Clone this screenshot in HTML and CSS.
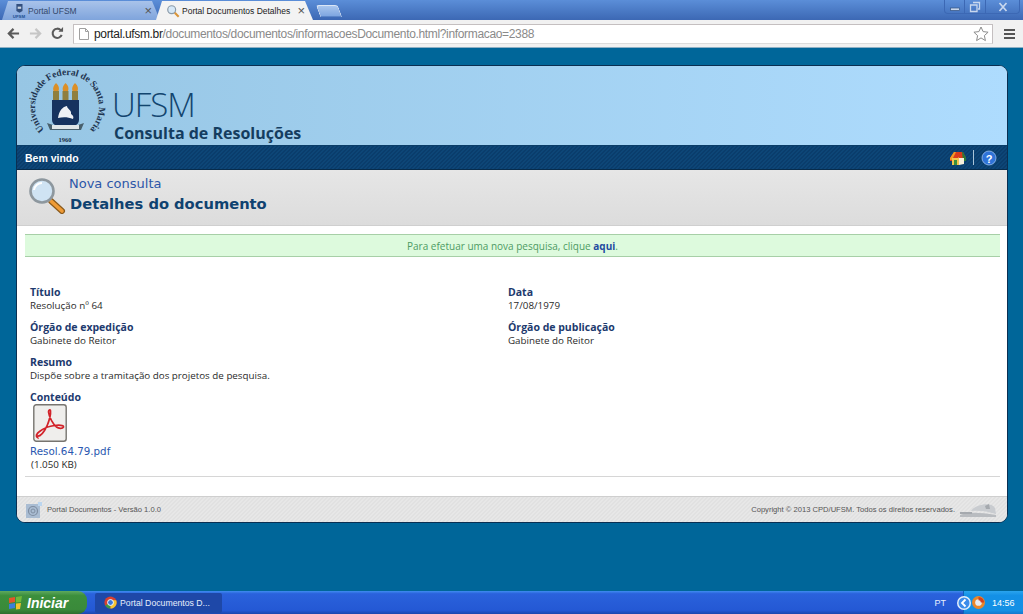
FILE: index.html
```html
<!DOCTYPE html>
<html lang="pt">
<head>
    <meta charset="UTF-8">
    <title>Portal Documentos Detalhes</title>
    <link rel="stylesheet" href="styles.css">
</head>
<body>

    <!-- Browser window -->
    <div class="tabstrip">
        <div class="tab tab-off">
            <svg class="tab-icon" viewBox="0 0 16 16"><path d="M5 0h7v8l-3.500 2L5 8z" fill="#33507f"/><rect x="6.500" y="3" width="4" height="2.500" fill="#c9d3e0"/><text class="tab-icon-text" x="8" y="15.500" text-anchor="middle">UFSM</text></svg>
            <span class="tab-label">Portal UFSM</span>
            <span class="tab-close">×</span>
        </div>
        <div class="tab tab-on">
            <svg class="tab-icon" viewBox="0 0 16 16"><circle cx="6.500" cy="6.500" r="4.500" fill="#d6e8f7" stroke="#8a9aa8" stroke-width="1.400"/><path d="M10 10l4.500 4.500" stroke="#d9953a" stroke-width="2.400"/></svg>
            <span class="tab-label">Portal Documentos Detalhes</span>
            <span class="tab-close">×</span>
        </div>
        <div class="tab-new"></div>
        <div class="win-buttons">
            <div class="win-btn win-min"><svg viewBox="0 0 12 12" width="12" height="12"><rect x="1.500" y="7" width="9" height="2.500" fill="#c9d8ee" stroke="#33527f" stroke-width=".7"/></svg></div>
            <div class="win-btn win-max"><svg viewBox="0 0 12 12" width="12" height="12"><path d="M4 1.500h6.500v6.500H9M1.500 4H8v6.500H1.500z" fill="none" stroke="#c9d8ee" stroke-width="1.300"/></svg></div>
            <div class="win-btn win-close"><svg viewBox="0 0 12 12" width="12" height="12"><path d="M2.500 2l7 8M9.500 2l-7 8" stroke="#c9d8ee" stroke-width="1.700"/></svg></div>
        </div>
    </div>
    <div class="toolbar">
        <svg class="nav-icon" viewBox="0 0 14 14"><path d="M13 7H3M7 2L2 7l5 5" fill="none" stroke="#5a5a5a" stroke-width="2.400"/></svg>
        <svg class="nav-icon" viewBox="0 0 14 14"><path d="M1 7h10M7 2l5 5-5 5" fill="none" stroke="#c6c6c6" stroke-width="2.400"/></svg>
        <svg class="nav-icon" viewBox="0 0 14 14"><path d="M11.500 8.500A5 5 0 1 1 10.500 3.400" fill="none" stroke="#5a5a5a" stroke-width="2.200"/><path d="M8 5h5V0z" fill="#5a5a5a"/></svg>
        <div class="omnibox">
            <svg class="page-icon" viewBox="0 0 10 12"><path d="M.5.5h6l3 3v8h-9zM6.500.5v3h3" fill="#fff" stroke="#a0a0a0"/></svg>
            <span class="url-host">portal.ufsm.br</span><span class="url-path">/documentos/documentos/informacoesDocumento.html?informacao=2388</span>
            <svg class="star" viewBox="0 0 16 16"><path d="M8 1l2.100 4.600 5 .6-3.700 3.400 1 5L8 11.900l-4.400 2.700 1-5L.9 6.200l5-.6z" fill="#fff" stroke="#8c8c8c"/></svg>
        </div>
        <div class="menu-icon"><span></span><span></span><span></span></div>
    </div>

    <!-- Page -->
    <div class="page">
        <div class="card">
            <div class="banner">
                <svg class="seal" viewBox="0 0 84 74">
                    <defs><path id="sealArc" d="M18.400 60.600A32 32 0 1 1 63.600 60.600"/></defs>
                    <text class="seal-text"><textPath href="#sealArc" textLength="150">Universidade Federal de Santa Maria</textPath></text>
                    <path d="M27 22h6v9h-6zM36.500 22h6v9h-6zM46 22h6v9h-6z" fill="#8f7f3e"/>
                    <path d="M30 14c3 3 3.500 5 2.500 8h-5c-1-3 0-5 2.500-8zM39.500 14c3 3 3.500 5 2.500 8h-5c-1-3 0-5 2.500-8zM49 14c3 3 3.500 5 2.500 8h-5c-1-3 0-5 2.500-8z" fill="#dc8f26"/>
                    <path d="M26 31h27v20c0 5-7 8-13.500 10C33 59 26 56 26 51z" fill="#16335f"/>
                    <path d="M32 49c1-7 4-11 9-12 0 3 5 4 4 8 2 1 3 3 2 5-5-2-10-2-15-1z" fill="#eef1f4"/>
                    <path d="M21 54l6 2h25l6-2-3 7H24z" fill="#49606c"/>
                    <rect x="26" y="56" width="27" height="4" fill="#dfe6e8"/>
                    <text class="seal-year" x="39" y="73" text-anchor="middle">1960</text>
                </svg>
                <div class="banner-text">
                    <div class="banner-ufsm">UFSM</div>
                    <div class="banner-sub">Consulta de Resoluções</div>
                </div>
            </div>
            <div class="navbar">
                <span class="welcome">Bem vindo</span>
                <div class="nav-tools">
                    <svg class="tool-icon" viewBox="0 0 16 16"><path d="M0 8l4-6h9l3 6v3H0z" fill="#d93a1c"/><path d="M0 8l4-6h2L2 10H0z" fill="#ef9a25"/><path d="M12 2h1l3 6v3h-3z" fill="#2c7a34"/><path d="M2 8h6l1-1v8H2z" fill="#f3c64e"/><path d="M9 8h5v6l-5 1z" fill="#f7f0dc"/><path d="M4 10h3v5H4z" fill="#3c8f3c"/></svg>
                    <span class="tool-sep"></span>
                    <svg class="tool-icon" viewBox="0 0 16 16"><circle cx="8" cy="8" r="7" fill="#2f73d8" stroke="#9cc0ee" stroke-width=".8"/><text class="help-mark" x="8" y="12.500" text-anchor="middle">?</text></svg>
                </div>
            </div>
            <div class="heading">
                <svg class="lens" viewBox="0 0 38 36"><path d="M23 23l11 10" stroke="#8a5a1c" stroke-width="6" stroke-linecap="round"/><path d="M23 23l11 10" stroke="#ef9b36" stroke-width="3.600" stroke-linecap="round"/><circle cx="14" cy="13" r="11.500" fill="#cfe3f3" stroke="#8d979e" stroke-width="2.600"/><path d="M6 12a8 8 0 0 1 8-7" fill="none" stroke="#fff" stroke-width="2"/></svg>
                <div class="heading-text">
                    <a class="new-search">Nova consulta</a>
                    <h1>Detalhes do documento</h1>
                </div>
            </div>
            <div class="content">
                <div class="notice">Para efetuar uma nova pesquisa, clique <a>aqui</a>.</div>
                <div class="fields">
                    <div class="field"><div class="label">Título</div><div class="value">Resolução nº 64</div></div>
                    <div class="field"><div class="label">Data</div><div class="value">17/08/1979</div></div>
                    <div class="field"><div class="label">Órgão de expedição</div><div class="value">Gabinete do Reitor</div></div>
                    <div class="field"><div class="label">Órgão de publicação</div><div class="value">Gabinete do Reitor</div></div>
                    <div class="field wide"><div class="label">Resumo</div><div class="value">Dispõe sobre a tramitação dos projetos de pesquisa.</div></div>
                    <div class="field wide">
                        <div class="label">Conteúdo</div>
                        <svg class="pdf-icon" viewBox="0 0 34 38"><rect x=".8" y=".8" width="32.400" height="36.400" rx="2.500" fill="#efeeec" stroke="#77746f" stroke-width="1.400"/><path d="M4 32c3 1 7-4 10-10 2-5 4-11 3.500-15-.3-2-2-1-2 1 .5 5 5 13 8 15 2 1.500 6 2 7 0 .5-2-5-2-9-1.500-5 .5-11 3-15 6-3 2-4 5-2 6z" fill="none" stroke="#d2232a" stroke-width="1.700"/></svg>
                        <a class="file-link">Resol.64.79.pdf</a>
                        <div class="file-size">(1.050 KB)</div>
                    </div>
                </div>
                <div class="rule"></div>
            </div>
            <div class="footer">
                <svg class="foot-logo" viewBox="0 0 16 16"><rect x="0" y="2" width="14" height="14" fill="#a9bcd2"/><rect x="12" y="0" width="4" height="4" fill="#bcd6ef"/><circle cx="7" cy="9" r="4.500" fill="none" stroke="#7f8ea2" stroke-width="1.200"/><circle cx="7" cy="9" r="2" fill="none" stroke="#7f8ea2"/></svg>
                <span class="foot-text">Portal Documentos - Versão 1.0.0</span>
                <span class="foot-copy">Copyright © 2013 CPD/UFSM. Todos os direitos reservados.</span>
                <svg class="foot-cpd" viewBox="0 0 38 16"><path d="M1 13c8-3 18-3 36 0v2H1z" fill="#b9bcc0"/><path d="M12 9c3-6 20-10 24-3l1 6c-9-3-18-4-25-3z" fill="#c9ccd0"/><path d="M1 10h12v2H1zM26 4l4-2 1 5h-4z" fill="#a5a9ae"/></svg>
            </div>
        </div>
    </div>

    <!-- Windows taskbar -->
    <div class="taskbar">
        <div class="start">
            <svg class="start-flag" viewBox="0 0 16 16"><path d="M1 3l6-1v5l-6 1z" fill="#e2552a"/><path d="M8 2l6-1-1 6-5 .5z" fill="#6fb83a"/><path d="M1 9l6-1v5l-6 1z" fill="#3c7fd9"/><path d="M8 8.500l5-.5-1 6-4 .5z" fill="#f3c22e"/></svg>
            <span>Iniciar</span>
        </div>
        <div class="task-item">
            <svg class="chrome-icon" viewBox="0 0 16 16"><circle cx="8" cy="8" r="7.500" fill="#d8412f"/><path d="M8 8L1.500 11.700A7.500 7.500 0 0 0 8 15.500z" fill="#3a9a44"/><path d="M8 8v7.500A7.500 7.500 0 0 0 15 5.300H8z" fill="#f4c430"/><circle cx="8" cy="8" r="3.600" fill="#3b78d8" stroke="#fff" stroke-width="1.200"/></svg>
            <span>Portal Documentos D...</span>
        </div>
        <div class="tray-lang">PT</div>
        <div class="tray">
            <span class="tray-arrow"><svg viewBox="0 0 14 14" width="14" height="14"><circle cx="7" cy="7" r="7" fill="#e4effb"/><circle cx="7" cy="7" r="5.500" fill="#3d8cea"/><path d="M8.500 3.500L5 7l3.500 3.500" fill="none" stroke="#fff" stroke-width="1.800"/></svg></span>
            <svg class="tray-app" viewBox="0 0 14 14"><circle cx="7" cy="7" r="7" fill="#e8872c"/><circle cx="7" cy="7" r="3.600" fill="#e5ecf2"/><path d="M7 1a6 6 0 0 1 6 6H9.500A2.500 2.500 0 0 0 7 4.500z" fill="#d2401e"/></svg>
            <span class="clock">14:56</span>
        </div>
    </div>

</body>
</html>
```

FILE: styles.css
```css
html, body {
    margin: 0;
    padding: 0;
    height: 100%;
    overflow: hidden;
}

body {
    width: 1023px;
    height: 614px;
    display: flex;
    flex-direction: column;
    font-family: 'Open Sans', sans-serif;
    background-color: #006699;
}

/* Browser window */
.tabstrip {
    height: 20px;
    display: flex;
    align-items: flex-end;
    padding-left: 2px;
    background: linear-gradient(#5b8ed8, #3c68b4);
    flex-shrink: 0;
}

.tab {
    height: 19px;
    display: flex;
    align-items: center;
    box-sizing: border-box;
    padding: 0 8px 0 10px;
    font-family: 'Liberation Sans', sans-serif;
    font-size: 8.500px;
    white-space: nowrap;
    clip-path: polygon(0 100%, 6px 0, calc(100% - 8px) 0, 100% 100%);
}

.tab-off {
    width: 158px;
    background: linear-gradient(#a9c3ea, #7fa4dc);
    color: #34496b;
}

.tab-on {
    width: 157px;
    margin-left: -4px;
    background: #f3f3f3;
    color: #222;
}

.tab-icon {
    width: 14px;
    height: 14px;
    margin-right: 2px;
    flex-shrink: 0;
}

.tab-icon-text {
    font-family: 'Liberation Sans', sans-serif;
    font-size: 5px;
    font-weight: bold;
    fill: #1c4f90;
}

.tab-label {
    flex: 1;
}

.tab-close {
    font-size: 13px;
    color: #555;
}

.tab-new {
    width: 20px;
    height: 10px;
    margin: 0 0 3px 5px;
    background: linear-gradient(#a9c6ee, #7ea6e0);
    border: 1px solid #dbe6f6;
    border-bottom-color: #5b85c8;
    border-radius: 3px 3px 0 0;
    transform: skewX(20deg);
}

.win-buttons {
    margin-left: auto;
    align-self: flex-start;
    display: flex;
    margin-right: 3px;
    height: 13px;
    border: 1px solid #3c68b4;
    border-top: none;
    border-radius: 0 0 4px 4px;
}

.win-btn {
    height: 13px;
    display: flex;
    align-items: center;
    justify-content: center;
    border-left: 1px solid #3c68b4;
}

.win-min {
    width: 19px;
    border-left: none;
}

.win-max {
    width: 20px;
}

.win-close {
    width: 33px;
}

.toolbar {
    height: 28px;
    box-sizing: border-box;
    display: flex;
    align-items: center;
    padding: 0 8px 0 7px;
    gap: 9px;
    background: #f1f1f1;
    border-bottom: 1px solid #8fb0c4;
    flex-shrink: 0;
}

.nav-icon {
    width: 13px;
    height: 13px;
}

.omnibox {
    flex: 1;
    height: 20px;
    box-sizing: border-box;
    display: flex;
    align-items: center;
    padding: 0 0 0 5px;
    background: #fff;
    border: 1px solid #c4bfc0;
    border-bottom-color: #dcdcdc;
    font-family: 'Liberation Sans', sans-serif;
    font-size: 12px;
    letter-spacing: -.34px;
    white-space: nowrap;
}

.page-icon {
    width: 10px;
    height: 12px;
    margin-right: 5px;
}

.url-host {
    color: #222;
}

.url-path {
    color: #8a8a8a;
}

.star {
    width: 16px;
    height: 16px;
    margin-left: auto;
    margin-right: 3px;
}

.menu-icon {
    width: 11px;
    display: flex;
    flex-direction: column;
    gap: 2px;
    margin-left: 2px;
}

.menu-icon span {
    height: 2px;
    background: #555;
}

/* Page */
.page {
    flex: 1;
    padding: 17px 15px 0 16px;
    background-color: #006699;
}

.card {
    height: 458px;
    box-sizing: border-box;
    display: flex;
    flex-direction: column;
    background: #fff;
    border: 1px solid #0a2f52;
    border-radius: 9px;
    overflow: hidden;
}

.banner {
    height: 80px;
    box-sizing: border-box;
    display: flex;
    padding: 3px 0 0 9px;
    background: linear-gradient(to right, #97c6e4, #aedcfe);
    border-bottom: 1px solid #0a3d68;
}

.seal {
    width: 84px;
    height: 74px;
    overflow: visible;
}

.seal-text {
    font-family: 'Liberation Serif', serif;
    font-size: 9.500px;
    font-weight: bold;
    fill: #1f3550;
}

.seal-year {
    font-family: 'Liberation Serif', serif;
    font-size: 6.500px;
    font-weight: bold;
    fill: #1a2d44;
}

.banner-text {
    margin-left: 2px;
}

.banner-ufsm {
    font-family: 'Open Sans', sans-serif;
    font-size: 33px;
    font-weight: 300;
    line-height: 36px;
    margin-top: 18px;
    color: #12456f;
    letter-spacing: -1px;
}

.banner-sub {
    font-family: 'Open Sans', sans-serif;
    font-size: 16px;
    line-height: 19px;
    font-weight: 700;
    margin-left: 2px;
    margin-top: 1px;
    color: #143d60;
}

.navbar {
    height: 24px;
    box-sizing: border-box;
    display: flex;
    align-items: center;
    justify-content: space-between;
    padding: 0 10px 0 8px;
    background: repeating-linear-gradient(135deg, #0a3d6c, #0a3d6c 1.414px, #0d4677 1.414px, #0d4677 2.828px);
    border-bottom: 1px solid #072c4c;
}

.welcome {
    font-family: 'Liberation Sans', sans-serif;
    font-size: 10.500px;
    font-weight: bold;
    color: #fff;
}

.nav-tools {
    display: flex;
    align-items: center;
    gap: 7px;
}

.tool-icon {
    width: 16px;
    height: 16px;
}

.tool-sep {
    width: 1px;
    height: 15px;
    background: #a9c4d8;
}

.help-mark {
    font-family: 'Liberation Sans', sans-serif;
    font-size: 11px;
    font-weight: bold;
    fill: #fff;
}

.heading {
    height: 56px;
    box-sizing: border-box;
    display: flex;
    padding: 6px 0 0 11px;
    background: linear-gradient(#e6e6e6, #dcdcdc);
    border-bottom: 1px solid #cfcfcf;
}

.lens {
    width: 38px;
    height: 36px;
    margin-top: 2px;
}

.heading-text {
    margin-left: 3px;
}

.new-search {
    display: block;
    font-family: 'DejaVu Sans', sans-serif;
    font-size: 13px;
    line-height: 15px;
    color: #2c56a8;
}

h1 {
    margin: 3px 0 0 1px;
    font-family: 'DejaVu Sans', sans-serif;
    font-size: 14.700px;
    line-height: 20px;
    font-weight: bold;
    color: #0f4270;
}

.content {
    flex: 1;
    padding: 8px 7px 0 8px;
}

.notice {
    height: 23px;
    box-sizing: border-box;
    line-height: 22px;
    text-align: center;
    font-family: 'Open Sans', sans-serif;
    font-size: 10px;
    color: #4d9a64;
    background: #ddfadd;
    border-top: 1px solid #a7cfa7;
    border-bottom: 1px solid #a7cfa7;
}

.notice a {
    font-weight: bold;
    color: #1f4aa0;
}

.fields {
    display: grid;
    grid-template-columns: 478px 1fr;
    row-gap: 8px;
    margin-top: 29px;
    padding-left: 5px;
}

.wide {
    grid-column: 1 / -1;
}

.label {
    font-family: 'Open Sans', sans-serif;
    font-size: 10.500px;
    line-height: 12px;
    font-weight: 700;
    color: #1d3a6e;
}

.value {
    margin-top: 1px;
    font-family: 'Open Sans', sans-serif;
    font-size: 9.800px;
    line-height: 14px;
    color: #2a2a2a;
}

.pdf-icon {
    display: block;
    width: 34px;
    height: 38px;
    margin: 1px 0 3px 3px;
}

.file-link {
    display: block;
    font-family: 'DejaVu Sans', sans-serif;
    font-size: 10.300px;
    line-height: 13px;
    color: #2a58b0;
}

.file-size {
    padding-left: 1px;
    font-family: 'Open Sans', sans-serif;
    font-size: 9.800px;
    line-height: 13px;
    color: #2a2a2a;
}

.rule {
    height: 1px;
    margin-top: 5px;
    background: #d6d6d6;
}

.footer {
    height: 26px;
    box-sizing: border-box;
    display: flex;
    align-items: center;
    padding: 0 10px 0 9px;
    background: repeating-linear-gradient(135deg, #e7e7e7, #e7e7e7 1.414px, #e1e1e1 1.414px, #e1e1e1 2.828px);
    border-top: 1px solid #cfcfcf;
}

.foot-logo {
    width: 16px;
    height: 16px;
}

.foot-text, .foot-copy {
    font-family: 'Liberation Sans', sans-serif;
    font-size: 7.600px;
    color: #555;
}

.foot-text {
    margin-left: 5px;
}

.foot-copy {
    margin-left: auto;
}

.foot-cpd {
    width: 38px;
    height: 16px;
    margin-left: 4px;
}

/* Windows taskbar */
.taskbar {
    height: 23px;
    display: flex;
    align-items: center;
    background: linear-gradient(#3f8cf0 0, #2a62dc 12%, #2458d4 85%, #1c47ac);
    flex-shrink: 0;
}

.start {
    width: 87px;
    height: 23px;
    box-sizing: border-box;
    display: flex;
    align-items: center;
    padding-left: 8px;
    gap: 3px;
    background: linear-gradient(#5fa95f, #3c8f3c 20%, #3a8a3a 80%, #2e6e2e);
    border-radius: 0 9px 9px 0;
    font-family: 'Liberation Sans', sans-serif;
    font-size: 14px;
    font-weight: bold;
    font-style: italic;
    color: #fff;
}

.start-flag {
    width: 16px;
    height: 16px;
}

.task-item {
    width: 127px;
    height: 20px;
    box-sizing: border-box;
    margin-left: 8px;
    display: flex;
    align-items: center;
    padding-left: 9px;
    gap: 3px;
    background: #1e48a8;
    border-radius: 2px;
    font-family: 'Liberation Sans', sans-serif;
    font-size: 8.700px;
    color: #e8eefc;
    white-space: nowrap;
}

.chrome-icon {
    width: 13px;
    height: 13px;
}

.tray-lang {
    margin-left: auto;
    margin-right: 17px;
    font-family: 'Liberation Sans', sans-serif;
    font-size: 9px;
    color: #e8eefc;
}

.tray {
    width: 60px;
    height: 23px;
    box-sizing: border-box;
    display: flex;
    align-items: center;
    gap: 1px;
    background: linear-gradient(#2aa4ee, #1390e6 20%, #1490e4 85%, #1478cc);
    border-left: 1px solid #0f60b8;
}

.tray-arrow {
    display: flex;
    margin-left: -7px;
}

.tray-app {
    width: 13px;
    height: 13px;
}

.clock {
    margin-left: 6px;
    font-family: 'Liberation Sans', sans-serif;
    font-size: 9px;
    color: #fff;
}
```
